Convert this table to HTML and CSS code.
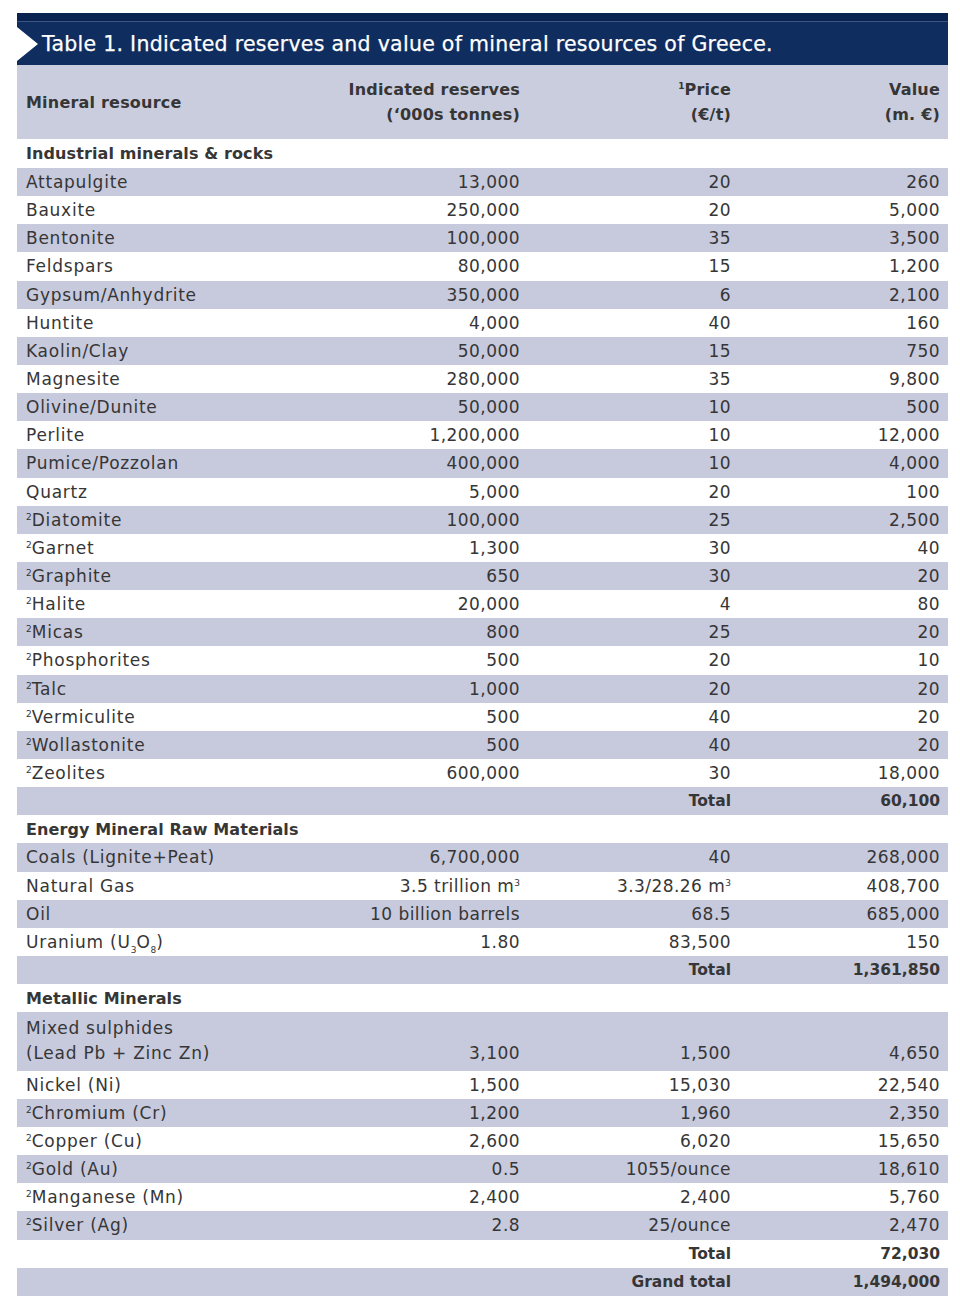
FILE: index.html
```html
<!DOCTYPE html>
<html lang="en">
<head>
<meta charset="utf-8">
<title>Table 1</title>
<link rel="stylesheet" href="styles.css">
</head>
<body>
<div class="sheet">
  <div class="title">
    <span class="notch"></span>
    <h1 class="title-text">Table 1. Indicated reserves and value of mineral resources of Greece.</h1>
  </div>
  <div class="table">
    <div class="row head">
      <div class="c1">Mineral resource</div>
      <div class="c2">Indicated reserves<br>(‘000s tonnes)</div>
      <div class="c3"><sup>1</sup>Price<br>(€/t)</div>
      <div class="c4">Value<br>(m. €)</div>
    </div>

    <div class="row section first"><div class="c1">Industrial minerals &amp; rocks</div></div>
    <div class="row s"><div class="c1">Attapulgite</div><div class="c2">13,000</div><div class="c3">20</div><div class="c4">260</div></div>
    <div class="row"><div class="c1">Bauxite</div><div class="c2">250,000</div><div class="c3">20</div><div class="c4">5,000</div></div>
    <div class="row s"><div class="c1">Bentonite</div><div class="c2">100,000</div><div class="c3">35</div><div class="c4">3,500</div></div>
    <div class="row"><div class="c1">Feldspars</div><div class="c2">80,000</div><div class="c3">15</div><div class="c4">1,200</div></div>
    <div class="row s"><div class="c1">Gypsum/Anhydrite</div><div class="c2">350,000</div><div class="c3">6</div><div class="c4">2,100</div></div>
    <div class="row"><div class="c1">Huntite</div><div class="c2">4,000</div><div class="c3">40</div><div class="c4">160</div></div>
    <div class="row s"><div class="c1">Kaolin/Clay</div><div class="c2">50,000</div><div class="c3">15</div><div class="c4">750</div></div>
    <div class="row"><div class="c1">Magnesite</div><div class="c2">280,000</div><div class="c3">35</div><div class="c4">9,800</div></div>
    <div class="row s"><div class="c1">Olivine/Dunite</div><div class="c2">50,000</div><div class="c3">10</div><div class="c4">500</div></div>
    <div class="row"><div class="c1">Perlite</div><div class="c2">1,200,000</div><div class="c3">10</div><div class="c4">12,000</div></div>
    <div class="row s"><div class="c1">Pumice/Pozzolan</div><div class="c2">400,000</div><div class="c3">10</div><div class="c4">4,000</div></div>
    <div class="row"><div class="c1">Quartz</div><div class="c2">5,000</div><div class="c3">20</div><div class="c4">100</div></div>
    <div class="row s"><div class="c1"><sup>2</sup>Diatomite</div><div class="c2">100,000</div><div class="c3">25</div><div class="c4">2,500</div></div>
    <div class="row"><div class="c1"><sup>2</sup>Garnet</div><div class="c2">1,300</div><div class="c3">30</div><div class="c4">40</div></div>
    <div class="row s"><div class="c1"><sup>2</sup>Graphite</div><div class="c2">650</div><div class="c3">30</div><div class="c4">20</div></div>
    <div class="row"><div class="c1"><sup>2</sup>Halite</div><div class="c2">20,000</div><div class="c3">4</div><div class="c4">80</div></div>
    <div class="row s"><div class="c1"><sup>2</sup>Micas</div><div class="c2">800</div><div class="c3">25</div><div class="c4">20</div></div>
    <div class="row"><div class="c1"><sup>2</sup>Phosphorites</div><div class="c2">500</div><div class="c3">20</div><div class="c4">10</div></div>
    <div class="row s"><div class="c1"><sup>2</sup>Talc</div><div class="c2">1,000</div><div class="c3">20</div><div class="c4">20</div></div>
    <div class="row"><div class="c1"><sup>2</sup>Vermiculite</div><div class="c2">500</div><div class="c3">40</div><div class="c4">20</div></div>
    <div class="row s"><div class="c1"><sup>2</sup>Wollastonite</div><div class="c2">500</div><div class="c3">40</div><div class="c4">20</div></div>
    <div class="row"><div class="c1"><sup>2</sup>Zeolites</div><div class="c2">600,000</div><div class="c3">30</div><div class="c4">18,000</div></div>
    <div class="row s total"><div class="c1"></div><div class="c2"></div><div class="c3">Total</div><div class="c4">60,100</div></div>

    <div class="row section"><div class="c1">Energy Mineral Raw Materials</div></div>
    <div class="row s"><div class="c1">Coals (Lignite+Peat)</div><div class="c2">6,700,000</div><div class="c3">40</div><div class="c4">268,000</div></div>
    <div class="row"><div class="c1">Natural Gas</div><div class="c2">3.5 trillion m<sup>3</sup></div><div class="c3">3.3/28.26 m<sup>3</sup></div><div class="c4">408,700</div></div>
    <div class="row s"><div class="c1">Oil</div><div class="c2">10 billion barrels</div><div class="c3">68.5</div><div class="c4">685,000</div></div>
    <div class="row"><div class="c1">Uranium (U<sub>3</sub>O<sub>8</sub>)</div><div class="c2">1.80</div><div class="c3">83,500</div><div class="c4">150</div></div>
    <div class="row s total"><div class="c1"></div><div class="c2"></div><div class="c3">Total</div><div class="c4">1,361,850</div></div>

    <div class="row section"><div class="c1">Metallic Minerals</div></div>
    <div class="row s tall"><div class="c1">Mixed sulphides<br>(Lead Pb + Zinc Zn)</div><div class="c2">3,100</div><div class="c3">1,500</div><div class="c4">4,650</div></div>
    <div class="row"><div class="c1">Nickel (Ni)</div><div class="c2">1,500</div><div class="c3">15,030</div><div class="c4">22,540</div></div>
    <div class="row s"><div class="c1"><sup>2</sup>Chromium (Cr)</div><div class="c2">1,200</div><div class="c3">1,960</div><div class="c4">2,350</div></div>
    <div class="row"><div class="c1"><sup>2</sup>Copper (Cu)</div><div class="c2">2,600</div><div class="c3">6,020</div><div class="c4">15,650</div></div>
    <div class="row s"><div class="c1"><sup>2</sup>Gold (Au)</div><div class="c2">0.5</div><div class="c3">1055/ounce</div><div class="c4">18,610</div></div>
    <div class="row"><div class="c1"><sup>2</sup>Manganese (Mn)</div><div class="c2">2,400</div><div class="c3">2,400</div><div class="c4">5,760</div></div>
    <div class="row s"><div class="c1"><sup>2</sup>Silver (Ag)</div><div class="c2">2.8</div><div class="c3">25/ounce</div><div class="c4">2,470</div></div>
    <div class="row total"><div class="c1"></div><div class="c2"></div><div class="c3">Total</div><div class="c4">72,030</div></div>
    <div class="row s total"><div class="c1"></div><div class="c2"></div><div class="c3">Grand total</div><div class="c4">1,494,000</div></div>
  </div>
</div>
</body>
</html>
```

FILE: styles.css
```css
* { box-sizing: border-box; }
html, body { margin: 0; padding: 0; background: #ffffff; }
body {
  font-family: "DejaVu Sans", "Liberation Sans", sans-serif;
  color: #363636;
}
.sheet {
  width: 960px;
  padding: 13px 12px 0 17px;
}
.title {
  position: relative;
  height: 52px;
  background: #102d5f;
  border-top: 8px solid #0a224f;
  box-shadow: inset 0 1px 0 #3b5684;
  display: flex;
  align-items: center;
}
.notch {
  position: absolute;
  left: 0;
  top: 6px;
  width: 0;
  height: 0;
  border-top: 17px solid transparent;
  border-bottom: 17px solid transparent;
  border-left: 21px solid #ffffff;
}
.title-text {
  margin: 0 0 0 25px;
  font-size: 20.5px;
  font-weight: normal;
  color: #ffffff;
  letter-spacing: 0.28px;
  padding-top: 1px;
  white-space: nowrap;
  -webkit-text-stroke: 0.25px #ffffff;
}
.table {
  display: flex;
  flex-direction: column;
  font-size: 17px;
  letter-spacing: 0.75px;
}
.row {
  display: grid;
  grid-template-columns: 313px 190px 211px 217px;
  height: 28.15px;
  align-items: center;
}
.row.s { background: #c7c9dc; }
.row.head {
  height: 74px;
  background: #cacddd;
  font-weight: bold;
  line-height: 25px;
  font-size: 16px;
  letter-spacing: 0.2px;
}
.row.section {
  font-weight: bold;
  font-size: 16px;
  letter-spacing: 0.1px;
}
.row.section.first { height: 29px; }
.row.tall {
  height: 58.5px;
  align-items: end;
  padding-bottom: 5px;
  line-height: 25px;
}
.row.total {
  font-weight: bold;
  font-size: 15.5px;
  letter-spacing: 0;
}
.c1 { padding-left: 9px; white-space: nowrap; }
.c2, .c3 { text-align: right; white-space: nowrap; }
.c4 { text-align: right; padding-right: 8px; white-space: nowrap; }
.c2, .c3, .c4 { letter-spacing: 0.45px; }
.row.head .c2, .row.head .c3, .row.head .c4 { letter-spacing: 0.2px; }
.row.total .c3, .row.total .c4 { letter-spacing: 0; }
sup { font-size: 9px; vertical-align: 6px; line-height: 0; letter-spacing: 0; }
sub { font-size: 9px; vertical-align: -5px; line-height: 0; letter-spacing: 0; }
```
